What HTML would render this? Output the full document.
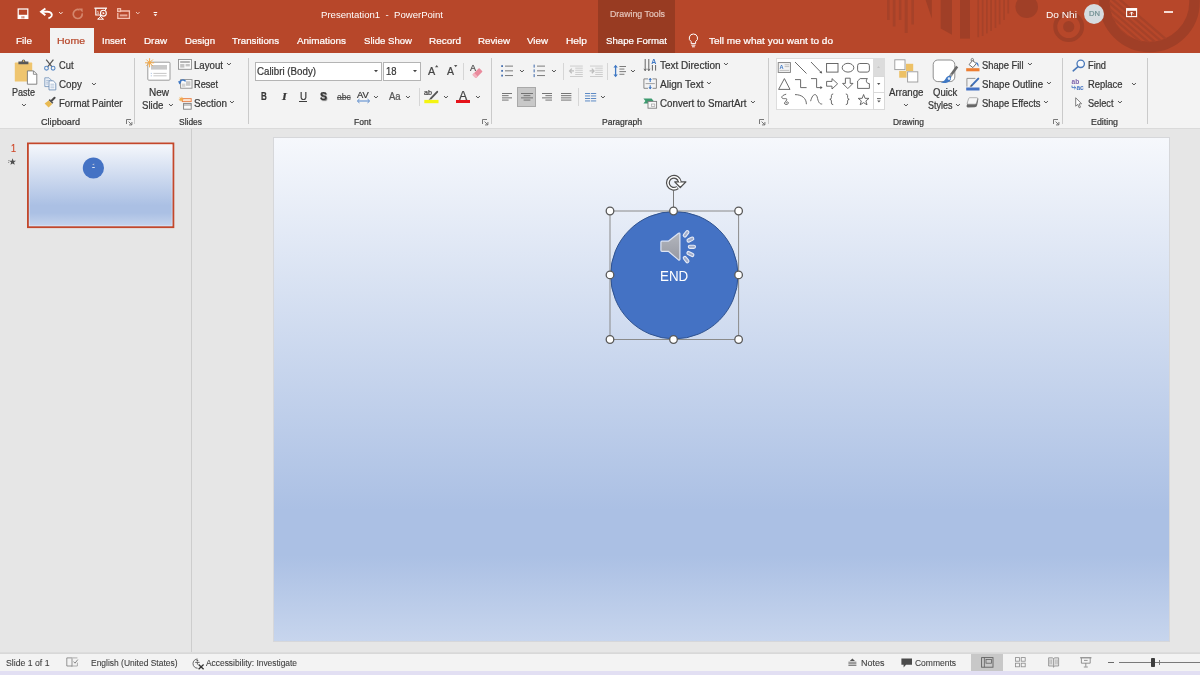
<!DOCTYPE html>
<html lang="en"><head><meta charset="utf-8"><title>Presentation1 - PowerPoint</title>
<style>
html,body{margin:0;padding:0}
body{width:1200px;height:675px;overflow:hidden;position:relative;background:#e6e6e6;font-family:"Liberation Sans", sans-serif;}
#app{position:absolute;left:0;top:0;width:1200px;height:675px;overflow:hidden;will-change:transform}
#app>div,#app>svg,#tx>span{position:absolute;display:block}
#tx{left:0;top:0;width:1200px;height:675px;will-change:transform}
#tx>span{white-space:pre;line-height:1;transform-origin:0 0;-webkit-text-stroke:0.22px currentColor;}
svg{overflow:visible}
</style></head><body><div id="app">
<div style="left:0px;top:0px;width:1200px;height:53px;background:#b7472a;"></div>
<svg style="left:0px;top:0px;overflow:hidden;" width="1200" height="53" viewBox="0 0 1200 53"><g><rect x="887" y="0" width="2.6" height="20" fill="#a64229"/><rect x="892.8" y="0" width="2.7" height="26.5" fill="#a64229"/><rect x="898.9" y="0" width="2.5" height="20" fill="#a64229"/><rect x="904.7" y="0" width="3" height="33" fill="#a64229"/><rect x="911.4" y="0" width="2.6" height="24.5" fill="#a64229"/><path d="M925.6 0 L931.8 0 L931.8 18.5 Z" fill="#a03f27"/><path d="M940.7 0 L952 0 L952 34.7 L940.7 28.5 Z" fill="#a03f27"/><rect x="960" y="0" width="10" height="38.6" fill="#a03f27"/><rect x="977.4" y="0" width="1.7" height="37.2" fill="#a64229"/><rect x="981.8" y="0" width="1.7" height="36" fill="#a64229"/><rect x="986" y="0" width="1.7" height="33.4" fill="#a64229"/><rect x="990.2" y="0" width="1.7" height="31" fill="#a64229"/><rect x="994.6" y="0" width="1.7" height="28" fill="#a64229"/><rect x="998.8" y="0" width="1.7" height="24.4" fill="#a64229"/><rect x="1003.2" y="0" width="1.7" height="20" fill="#a64229"/><rect x="1007.4" y="0" width="1.7" height="13.5" fill="#a64229"/><circle cx="1026.7" cy="6.7" r="11.3" fill="#a03f27"/><circle cx="1068.7" cy="26.7" r="5.6" fill="#a03f27"/><circle cx="1068.7" cy="26.7" r="13.4" fill="none" stroke="#a03f27" stroke-width="4"/><circle cx="1149.5" cy="2" r="45" fill="none" stroke="#a03f27" stroke-width="10.5"/><clipPath id="rc"><circle cx="1149.5" cy="2" r="40.5"/></clipPath><g clip-path="url(#rc)"><path d="M1097.5 -19.5 L1181.0 52.1" stroke="#a64229" stroke-width="2.3"/><path d="M1094.5 -16.0 L1178.0 55.6" stroke="#a64229" stroke-width="2.3"/><path d="M1091.5 -12.5 L1175.0 59.1" stroke="#a64229" stroke-width="2.3"/><path d="M1088.5 -9.1 L1172.0 62.6" stroke="#a64229" stroke-width="2.3"/><path d="M1085.6 -5.6 L1169.0 66.0" stroke="#a64229" stroke-width="2.3"/><path d="M1082.6 -2.1 L1166.0 69.5" stroke="#a64229" stroke-width="2.3"/><path d="M1079.6 1.4 L1163.1 73.0" stroke="#a64229" stroke-width="2.3"/></g></g></svg>
<div style="left:598px;top:0px;width:77px;height:53px;background:#983b22;"></div>
<div style="left:50px;top:28px;width:44px;height:26px;background:#f3f3f3;"></div>
<div style="left:0px;top:53px;width:1200px;height:75px;background:#f3f3f3;"></div>
<div style="left:0px;top:128px;width:1200px;height:1px;background:#dadada;"></div>
<div style="left:0px;top:129px;width:1200px;height:524px;background:#e6e6e6;"></div>
<div style="left:191px;top:129px;width:1px;height:523px;background:#cdcdcd;"></div>
<div style="left:0px;top:652px;width:1200px;height:2px;background:linear-gradient(180deg,#dedede,#d6d6d6);"></div>
<div style="left:0px;top:654px;width:1200px;height:17px;background:#f3f3f3;"></div>
<div style="left:0px;top:671px;width:1200px;height:4px;background:#e2dff3;"></div>
<svg style="left:1084px;top:4px;" width="20" height="20" viewBox="0 0 20 20"><circle cx="10" cy="10" r="10" fill="#d6dce0"/></svg>
<div style="left:134px;top:58px;width:1px;height:66px;background:#cacaca;"></div>
<div style="left:248px;top:58px;width:1px;height:66px;background:#cacaca;"></div>
<div style="left:490.5px;top:58px;width:1px;height:66px;background:#cacaca;"></div>
<div style="left:768px;top:58px;width:1px;height:66px;background:#cacaca;"></div>
<div style="left:1062px;top:58px;width:1px;height:66px;background:#cacaca;"></div>
<div style="left:1147px;top:58px;width:1px;height:66px;background:#cacaca;"></div>
<div style="left:254.5px;top:62px;width:127px;height:19px;background:#ffffff;box-sizing:border-box;border:1px solid #b4b4b4;"></div>
<div style="left:383px;top:62px;width:37.5px;height:19px;background:#ffffff;box-sizing:border-box;border:1px solid #b4b4b4;"></div>
<div style="left:971px;top:654px;width:32px;height:17px;background:#c8c8c8;"></div>
<svg style="left:26px;top:141px;" width="150" height="89" viewBox="0 0 150 89"><defs><linearGradient id="sg" x1="0" y1="0" x2="0" y2="1"><stop offset="0" stop-color="#f6f8fc"/><stop offset="0.74" stop-color="#abc0e4"/><stop offset="0.83" stop-color="#abc0e4"/><stop offset="1" stop-color="#c7d5ed"/></linearGradient></defs><rect x="1.9" y="2.4" width="145.5" height="83.8" fill="url(#sg)" stroke="#c4472a" stroke-width="1.8"/><rect x="3.3" y="3.8" width="142.7" height="81" fill="none" stroke="#f4f6fb" stroke-width="0.5" opacity="0.7"/></svg>
<svg style="left:82px;top:157px;" width="23" height="23" viewBox="0 0 23 23"><circle cx="11.4" cy="11" r="10.6" fill="#4472c4"/><rect x="10.2" y="10.1" width="2.6" height="0.9" fill="#e8eefa"/><path d="M10.6 7 L11.4 7 L12.2 6.2 L12.2 8.6 L11.4 7.9 L10.6 7.9 Z" fill="#aeb9d2"/></svg>
<svg style="left:8px;top:157.5px;" width="9" height="8" viewBox="0 0 9 8"><path d="M4.60 0.30 L5.48 2.69 L8.02 2.79 L6.03 4.36 L6.72 6.81 L4.60 5.40 L2.48 6.81 L3.17 4.36 L1.18 2.79 L3.72 2.69 Z" fill="#4f4f4f"/><path d="M0.2 2.6 L1.4 2.6 M0 4.4 L1.2 4.4" stroke="#6a6a6a" stroke-width="0.7"/></svg>
<div style="left:274px;top:138px;width:895px;height:503px;background:linear-gradient(180deg,#f6f8fc 0%,#abc0e4 74%,#abc0e4 83%,#c7d5ed 100%);box-shadow:0 0 0 1px #d6d7da;"></div>
<svg style="left:600px;top:165px;" width="150" height="185" viewBox="0 0 150 185"><defs><linearGradient id="spk" x1="0" y1="0" x2="0" y2="1"><stop offset="0" stop-color="#b3b6bd"/><stop offset="1" stop-color="#9699a3"/></linearGradient></defs><circle cx="74.3" cy="110.2" r="63.7" fill="#4472c4" stroke="#2f528f" stroke-width="1"/><rect x="10.0" y="46.0" width="128.6" height="128.5" fill="none" stroke="#8a8a8a" stroke-width="1"/><path d="M73.5 25.5 L73.5 42" stroke="#7a7a7a" stroke-width="1"/><circle cx="10.0" cy="46.0" r="3.8" fill="#ffffff" stroke="#595959" stroke-width="1.3"/><circle cx="10.0" cy="109.9" r="3.8" fill="#ffffff" stroke="#595959" stroke-width="1.3"/><circle cx="10.0" cy="174.5" r="3.8" fill="#ffffff" stroke="#595959" stroke-width="1.3"/><circle cx="73.5" cy="46.0" r="3.8" fill="#ffffff" stroke="#595959" stroke-width="1.3"/><circle cx="73.5" cy="174.5" r="3.8" fill="#ffffff" stroke="#595959" stroke-width="1.3"/><circle cx="138.6" cy="46.0" r="3.8" fill="#ffffff" stroke="#595959" stroke-width="1.3"/><circle cx="138.6" cy="109.9" r="3.8" fill="#ffffff" stroke="#595959" stroke-width="1.3"/><circle cx="138.6" cy="174.5" r="3.8" fill="#ffffff" stroke="#595959" stroke-width="1.3"/><path d="M77.59 22.53 A6.0 6.0 0 1 1 79.84 16.96" fill="none" stroke="#4f4f4f" stroke-width="4.0"/><path d="M77.34 22.71 A6.0 6.0 0 1 1 79.84 16.96" fill="none" stroke="#ffffff" stroke-width="1.5"/><path d="M74.7 16.9 L85.9 16.9 L80.3 22.5 Z" fill="#ffffff" stroke="#4f4f4f" stroke-width="1.25" stroke-linejoin="round"/><path d="M79.10 14.80 A6.0 6.0 0 0 1 79.89 17.38" fill="none" stroke="#ffffff" stroke-width="1.5"/><path d="M61.89999999999998 76.19999999999999 L68.29999999999998 76.19999999999999 L78.49999999999997 68.29999999999998 Q79.89999999999998 67.49999999999999 79.89999999999998 69.1 L79.89999999999998 94.1 Q79.89999999999998 95.69999999999999 78.49999999999997 94.89999999999999 L68.29999999999998 86.29999999999998 L61.89999999999998 86.29999999999998 Q60.89999999999998 86.29999999999998 60.89999999999998 85.29999999999998 L60.89999999999998 77.19999999999999 Q60.89999999999998 76.19999999999999 61.89999999999998 76.19999999999999 Z" fill="url(#spk)" stroke="#dde4f3" stroke-width="1.2" stroke-linejoin="round"/><rect x="82.5" y="67.2" width="7.2" height="3.2" rx="1.6" fill="#a3aecb" stroke="#e6ebf7" stroke-width="1.1" transform="rotate(-52 86.1 68.8)"/><rect x="86.8" y="73.0" width="7.2" height="3.2" rx="1.6" fill="#a3aecb" stroke="#e6ebf7" stroke-width="1.1" transform="rotate(-27 90.4 74.6)"/><rect x="88.3" y="80.2" width="7.2" height="3.2" rx="1.6" fill="#a3aecb" stroke="#e6ebf7" stroke-width="1.1" transform="rotate(0 91.9 81.8)"/><rect x="86.8" y="87.4" width="7.2" height="3.2" rx="1.6" fill="#a3aecb" stroke="#e6ebf7" stroke-width="1.1" transform="rotate(27 90.4 89.0)"/><rect x="82.5" y="93.0" width="7.2" height="3.2" rx="1.6" fill="#a3aecb" stroke="#e6ebf7" stroke-width="1.1" transform="rotate(52 86.1 94.6)"/></svg>
<svg style="left:17px;top:7.5px;" width="12" height="11" viewBox="0 0 12 11"><rect x="1.2" y="1" width="9.6" height="9.4" fill="none" stroke="#ffffff" stroke-width="1.25"/><rect x="1.2" y="6.8" width="9.6" height="3.6" fill="#ffffff"/><rect x="4.6" y="8.2" width="0.9" height="2.2" fill="#b7472a"/><rect x="6.4" y="8.2" width="0.9" height="2.2" fill="#b7472a"/></svg>
<svg style="left:39px;top:7px;" width="15" height="13" viewBox="0 0 15 13"><path d="M6.4 1.4 L2 4.8 L6.4 8.2" fill="none" stroke="#ffffff" stroke-width="1.9" stroke-linejoin="miter"/><path d="M2.6 4.8 L8.6 4.8 C12 4.8 13.4 7 12.6 9 C12 10.4 10.8 11 9.4 11.2" fill="none" stroke="#ffffff" stroke-width="1.9"/></svg>
<svg style="left:57.7px;top:10.85px;" width="5.6" height="3.9" viewBox="0 0 5.6 3.9"><path d="M1 1 L2.8 2.9 L4.6 1" fill="none" stroke="#f6e0d9" stroke-width="1.0"/></svg>
<svg style="left:72px;top:7.5px;" width="12" height="12" viewBox="0 0 12 12"><path d="M7.6 1.9 A4.5 4.5 0 1 0 10.2 5.4" fill="none" stroke="#d4866d" stroke-width="1.7"/><path d="M6.6 0.4 L10.6 0.4 L10.6 4.4 Z" fill="#d4866d"/></svg>
<svg style="left:94px;top:7px;" width="14" height="13" viewBox="0 0 14 13"><path d="M0.4 1.2 L13 1.2" stroke="#ffffff" stroke-width="1.3"/><path d="M1.8 1.6 L1.8 8 L6.2 8 M11.6 1.6 L11.6 3" fill="none" stroke="#ffffff" stroke-width="1.1"/><circle cx="9.4" cy="6.2" r="2.9" fill="none" stroke="#ffffff" stroke-width="1.1"/><path d="M8.6 4.8 L10.8 6.2 L8.6 7.6 Z" fill="#ffffff"/><text x="3" y="6.8" font-family="Liberation Sans, sans-serif" font-size="4" fill="#ffffff">5</text><path d="M6.6 8 L6.6 10 M4 12 L6.6 9.6 L9.2 12 M3.4 12.2 L9.8 12.2" fill="none" stroke="#ffffff" stroke-width="1"/></svg>
<svg style="left:117px;top:7.5px;" width="14" height="12" viewBox="0 0 14 12"><path d="M4 3 L12.4 3 L12.4 10.4 L0.8 10.4 L0.8 5" fill="none" stroke="#f5c0b0" stroke-width="1.3"/><rect x="0.6" y="0.6" width="3" height="3" fill="none" stroke="#f5c0b0" stroke-width="1.1"/><path d="M0.2 2.1 L4 2.1" stroke="#f5c0b0" stroke-width="0.8"/><rect x="2.8" y="6.4" width="7.6" height="2" fill="#f5c0b0" opacity="0.8"/></svg>
<svg style="left:135.2px;top:10.85px;" width="5.6" height="3.9" viewBox="0 0 5.6 3.9"><path d="M1 1 L2.8 2.9 L4.6 1" fill="none" stroke="#f1d5cc" stroke-width="0.9"/></svg>
<svg style="left:153.3px;top:10.6px;" width="5" height="6" viewBox="0 0 5 6"><rect x="0.6" y="1" width="3.6" height="1" fill="#ffffff"/><path d="M0.6 3.2 L4.2 3.2 L2.4 5.2 Z" fill="#ffffff"/></svg>
<svg style="left:1126px;top:8px;" width="12" height="10" viewBox="0 0 12 10"><rect x="0.6" y="0.6" width="10" height="8" fill="none" stroke="#ffffff" stroke-width="1.1"/><rect x="0.6" y="0.6" width="10" height="2.2" fill="#ffffff"/><path d="M5.6 7.6 L5.6 4.2 M4 5.6 L5.6 4 L7.2 5.6" fill="none" stroke="#ffffff" stroke-width="1"/></svg>
<div style="left:1163.5px;top:11.3px;width:9px;height:1.3px;background:#f6dcd4;"></div>
<svg style="left:688px;top:33px;" width="11" height="16" viewBox="0 0 11 16"><path d="M5.4 1 A4.1 4.1 0 0 1 7.6 8.6 L7.6 10.6 L3.2 10.6 L3.2 8.6 A4.1 4.1 0 0 1 5.4 1 Z" fill="none" stroke="#ffffff" stroke-width="1"/><path d="M3.4 12.2 L7.4 12.2 M4 13.8 L6.8 13.8" stroke="#ffffff" stroke-width="1"/></svg>
<svg style="left:14px;top:59px;" width="24" height="26" viewBox="0 0 24 26"><rect x="0.8" y="3.6" width="17.4" height="19" rx="0.6" fill="#efc56f"/><path d="M4.4 5.3 L4.4 2.6 L7.6 2.6 Q7.8 0.5 9.5 0.5 Q11.2 0.5 11.4 2.6 L14.4 2.6 L14.4 5.3 Z" fill="#585858"/><circle cx="9.5" cy="2.1" r="0.8" fill="#efc56f"/><path d="M13.4 11.9 L19.6 11.9 L22.8 15.1 L22.8 25.2 L13.4 25.2 Z" fill="#ffffff" stroke="#777" stroke-width="0.9"/><path d="M19.4 12 L19.4 15.3 L22.7 15.3" fill="none" stroke="#777" stroke-width="0.8"/></svg>
<svg style="left:20.65px;top:102.6px;" width="5.9" height="4.0" viewBox="0 0 5.9 4.0"><path d="M1 1 L2.95 3.0 L4.9 1" fill="none" stroke="#505050" stroke-width="1"/></svg>
<svg style="left:44px;top:59px;" width="12" height="12" viewBox="0 0 12 12"><path d="M2.2 0.6 L8.2 8.2 M9.4 0.6 L3.4 8.2" stroke="#555" stroke-width="1.2" fill="none"/><circle cx="2.5" cy="9.2" r="1.9" fill="none" stroke="#5a8ac6" stroke-width="1.1"/><circle cx="9.1" cy="9.2" r="1.9" fill="none" stroke="#5a8ac6" stroke-width="1.1"/></svg>
<svg style="left:43.5px;top:77px;" width="13" height="14" viewBox="0 0 13 14"><path d="M0.8 0.8 L5 0.8 L7.4 3.2 L7.4 9.6 L0.8 9.6 Z" fill="#eef2f8" stroke="#7f9cc0" stroke-width="0.9"/><path d="M2.2 3.4 L5.6 3.4 M2.2 5.2 L4 5.2 M2.2 7 L4 7" stroke="#8fa9c8" stroke-width="0.7"/><path d="M5 3.8 L9.2 3.8 L11.8 6.4 L11.8 12.9 L5 12.9 Z" fill="#ffffff" stroke="#6f8fb6" stroke-width="0.9"/><path d="M6.4 7.2 L10.4 7.2 M6.4 9 L10.4 9 M6.4 10.8 L10.4 10.8" stroke="#8fa9c8" stroke-width="0.7"/></svg>
<svg style="left:90.65px;top:81.8px;" width="5.9" height="4.0" viewBox="0 0 5.9 4.0"><path d="M1 1 L2.95 3.0 L4.9 1" fill="none" stroke="#505050" stroke-width="1"/></svg>
<svg style="left:44px;top:96.5px;" width="12" height="11" viewBox="0 0 12 11"><path d="M7.6 3.8 L10.6 0.8" stroke="#4a4a4a" stroke-width="2" stroke-linecap="round"/><path d="M5.2 2.6 L8.8 6.2" stroke="#555" stroke-width="1.6"/><path d="M4.6 3.4 L8.2 7 L4.6 10.4 L0.6 6.6 Z" fill="#e9ba52"/></svg>
<svg style="left:125.5px;top:118.5px;" width="7" height="7" viewBox="0 0 7 7"><path d="M0.5 5 L0.5 0.5 L5 0.5" fill="none" stroke="#6a6a6a" stroke-width="0.9"/><path d="M2.6 2.6 L5.8 5.8 M5.9 3 L5.9 5.9 L3 5.9" fill="none" stroke="#6a6a6a" stroke-width="0.9"/></svg>
<svg style="left:481.5px;top:118.5px;" width="7" height="7" viewBox="0 0 7 7"><path d="M0.5 5 L0.5 0.5 L5 0.5" fill="none" stroke="#6a6a6a" stroke-width="0.9"/><path d="M2.6 2.6 L5.8 5.8 M5.9 3 L5.9 5.9 L3 5.9" fill="none" stroke="#6a6a6a" stroke-width="0.9"/></svg>
<svg style="left:758.5px;top:118.5px;" width="7" height="7" viewBox="0 0 7 7"><path d="M0.5 5 L0.5 0.5 L5 0.5" fill="none" stroke="#6a6a6a" stroke-width="0.9"/><path d="M2.6 2.6 L5.8 5.8 M5.9 3 L5.9 5.9 L3 5.9" fill="none" stroke="#6a6a6a" stroke-width="0.9"/></svg>
<svg style="left:1052.5px;top:118.5px;" width="7" height="7" viewBox="0 0 7 7"><path d="M0.5 5 L0.5 0.5 L5 0.5" fill="none" stroke="#6a6a6a" stroke-width="0.9"/><path d="M2.6 2.6 L5.8 5.8 M5.9 3 L5.9 5.9 L3 5.9" fill="none" stroke="#6a6a6a" stroke-width="0.9"/></svg>
<svg style="left:144px;top:57px;" width="28" height="25" viewBox="0 0 28 25"><rect x="3.8" y="5.2" width="22.2" height="18" rx="1" fill="#ffffff" stroke="#9c9c9c" stroke-width="1"/><rect x="7" y="8" width="16" height="4.6" fill="#c9c9c9"/><path d="M9.4 16.4 L22.6 16.4 M9.4 18.8 L22.6 18.8" stroke="#b9b9b9" stroke-width="0.8"/><path d="M6.8 16.4 L7.8 16.4 M6.8 18.8 L7.8 18.8" stroke="#9bb7dd" stroke-width="0.9"/><path d="M6.50 5.80 L10.20 5.80 M6.24 6.44 L8.85 9.05 M5.60 6.70 L5.60 10.40 M4.96 6.44 L2.35 9.05 M4.70 5.80 L1.00 5.80 M4.96 5.16 L2.35 2.55 M5.60 4.90 L5.60 1.20 M6.24 5.16 L8.85 2.55 " stroke="#f2ab4d" stroke-width="1.0" fill="none"/><circle cx="5.6" cy="5.8" r="1.5" fill="#f2ab4d"/></svg>
<svg style="left:167.75px;top:102.6px;" width="5.9" height="4.0" viewBox="0 0 5.9 4.0"><path d="M1 1 L2.95 3.0 L4.9 1" fill="none" stroke="#505050" stroke-width="1"/></svg>
<svg style="left:178px;top:59px;" width="14" height="11" viewBox="0 0 14 11"><rect x="0.5" y="0.5" width="13" height="9.8" fill="#fafafa" stroke="#8e8e8e" stroke-width="0.9"/><rect x="2.2" y="2" width="9.6" height="2" fill="#b5b5b5"/><rect x="2.2" y="5" width="4.2" height="3.6" fill="#c4c4c4"/><rect x="7.6" y="5" width="4.2" height="2.4" fill="#c4c4c4"/></svg>
<svg style="left:226.05px;top:62.0px;" width="5.9" height="4.0" viewBox="0 0 5.9 4.0"><path d="M1 1 L2.95 3.0 L4.9 1" fill="none" stroke="#505050" stroke-width="1"/></svg>
<svg style="left:177.5px;top:78px;" width="15" height="11" viewBox="0 0 15 11"><rect x="2.6" y="1.6" width="11.4" height="8.6" fill="#fafafa" stroke="#8e8e8e" stroke-width="0.9"/><rect x="8" y="3.2" width="4.4" height="4.6" fill="#c9c9c9"/><rect x="3.8" y="5.6" width="3.6" height="3.2" fill="#d3d3d3"/><path d="M1.6 5.2 A3.3 3.3 0 0 1 7.6 3.4" fill="none" stroke="#3f78c4" stroke-width="1.5"/><path d="M0 3.2 L3.6 3.4 L1.6 6.6 Z" fill="#3f78c4"/></svg>
<svg style="left:179px;top:96.5px;" width="13" height="13" viewBox="0 0 13 13"><rect x="3.4" y="1.6" width="8.8" height="3" fill="#fbe3cf" stroke="#e9824a" stroke-width="0.9"/><rect x="4.6" y="6.4" width="7.6" height="5.8" fill="#fafafa" stroke="#7e7e7e" stroke-width="0.9"/><path d="M4.6 8 L12.2 8" stroke="#7e7e7e" stroke-width="0.8"/><path d="M3.10 2.20 L4.60 2.20 M2.84 2.84 L3.90 3.90 M2.20 3.10 L2.20 4.60 M1.56 2.84 L0.50 3.90 M1.30 2.20 L-0.20 2.20 M1.56 1.56 L0.50 0.50 M2.20 1.30 L2.20 -0.20 M2.84 1.56 L3.90 0.50 " stroke="#f2ab4d" stroke-width="0.7" fill="none"/><circle cx="2.2" cy="2.2" r="1.5" fill="#f2ab4d"/></svg>
<svg style="left:229.35px;top:100.0px;" width="5.9" height="4.0" viewBox="0 0 5.9 4.0"><path d="M1 1 L2.95 3.0 L4.9 1" fill="none" stroke="#505050" stroke-width="1"/></svg>
<svg style="left:374.0px;top:70.3px;" width="4" height="2.2" viewBox="0 0 4 2.2"><path d="M0 0 L4 0 L2.0 2.2 Z" fill="#444"/></svg>
<svg style="left:412.6px;top:70.3px;" width="4" height="2.2" viewBox="0 0 4 2.2"><path d="M0 0 L4 0 L2.0 2.2 Z" fill="#444"/></svg>
<div style="left:299px;top:101.2px;width:8px;height:0.9px;background:#3c3c3c;"></div>
<svg style="left:356.5px;top:99px;" width="13" height="4" viewBox="0 0 13 4"><path d="M1.6 2 L11.4 2" stroke="#5d8fd0" stroke-width="1.1"/><path d="M2.4 0.2 L0.4 2 L2.4 3.8 M10.6 0.2 L12.6 2 L10.6 3.8" fill="none" stroke="#3f78c4" stroke-width="1"/></svg>
<svg style="left:372.85px;top:94.8px;" width="5.9" height="4.0" viewBox="0 0 5.9 4.0"><path d="M1 1 L2.95 3.0 L4.9 1" fill="none" stroke="#505050" stroke-width="1"/></svg>
<svg style="left:404.75px;top:94.8px;" width="5.9" height="4.0" viewBox="0 0 5.9 4.0"><path d="M1 1 L2.95 3.0 L4.9 1" fill="none" stroke="#505050" stroke-width="1"/></svg>
<svg style="left:442.55px;top:94.8px;" width="5.9" height="4.0" viewBox="0 0 5.9 4.0"><path d="M1 1 L2.95 3.0 L4.9 1" fill="none" stroke="#505050" stroke-width="1"/></svg>
<svg style="left:474.85px;top:94.8px;" width="5.9" height="4.0" viewBox="0 0 5.9 4.0"><path d="M1 1 L2.95 3.0 L4.9 1" fill="none" stroke="#505050" stroke-width="1"/></svg>
<svg style="left:435px;top:65px;" width="3.4" height="2.2" viewBox="0 0 3.4 2.2"><path d="M0 2.2 L3.4 2.2 L1.7 0 Z" fill="#555"/></svg>
<svg style="left:453.6px;top:65.2px;" width="3.4" height="2.2" viewBox="0 0 3.4 2.2"><path d="M0 0 L3.4 0 L1.7 2.2 Z" fill="#555"/></svg>
<div style="left:463px;top:63px;width:1px;height:17px;background:#d6d6d6;"></div>
<div style="left:418.5px;top:88px;width:1px;height:18px;background:#d6d6d6;"></div>
<svg style="left:471px;top:66px;" width="13" height="13" viewBox="0 0 13 13"><g transform="rotate(-45 6.5 7)"><rect x="1.6" y="4.6" width="9.6" height="5" rx="0.8" fill="#e98a9c"/><rect x="1.6" y="4.6" width="2.6" height="5" rx="0.6" fill="#f3b4c0"/></g></svg>
<svg style="left:423.5px;top:90px;" width="15" height="14" viewBox="0 0 15 14"><path d="M13.2 1.8 L7 8.4" stroke="#555" stroke-width="1.9" stroke-linecap="round"/><path d="M6.4 7.8 L4.6 10 L7.4 9 Z" fill="#555"/><rect x="0.3" y="9.9" width="14.2" height="3.3" fill="#f4f411"/></svg>
<div style="left:456.2px;top:100.2px;width:13.4px;height:3px;background:#e5131a;"></div>
<svg style="left:500px;top:64px;" width="14" height="13" viewBox="0 0 14 13"><rect x="1.2" y="1.20" width="1.8" height="1.8" fill="#4a72b0"/><rect x="5" y="1.65" width="8" height="0.9" fill="#6e6e6e"/><rect x="1.2" y="5.95" width="1.8" height="1.8" fill="#4a72b0"/><rect x="5" y="6.40" width="8" height="0.9" fill="#6e6e6e"/><rect x="1.2" y="10.70" width="1.8" height="1.8" fill="#4a72b0"/><rect x="5" y="11.15" width="8" height="0.9" fill="#6e6e6e"/></svg>
<svg style="left:519.05px;top:69.3px;" width="5.9" height="4.0" viewBox="0 0 5.9 4.0"><path d="M1 1 L2.95 3.0 L4.9 1" fill="none" stroke="#505050" stroke-width="1"/></svg>
<svg style="left:532px;top:64px;" width="14" height="13" viewBox="0 0 14 13"><rect x="1.6" y="0.60" width="1.1" height="3" fill="#4a72b0"/><rect x="5" y="1.65" width="8" height="0.9" fill="#6e6e6e"/><rect x="1.6" y="5.35" width="1.1" height="3" fill="#4a72b0"/><rect x="5" y="6.40" width="8" height="0.9" fill="#6e6e6e"/><rect x="1.6" y="10.10" width="1.1" height="3" fill="#4a72b0"/><rect x="5" y="11.15" width="8" height="0.9" fill="#6e6e6e"/></svg>
<svg style="left:551.35px;top:69.3px;" width="5.9" height="4.0" viewBox="0 0 5.9 4.0"><path d="M1 1 L2.95 3.0 L4.9 1" fill="none" stroke="#505050" stroke-width="1"/></svg>
<div style="left:563.2px;top:63px;width:1px;height:17px;background:#d6d6d6;"></div>
<svg style="left:568.5px;top:65px;" width="14" height="12" viewBox="0 0 14 12"><rect x="1" y="0.60" width="12.8" height="0.9" fill="#c9c9c9"/><rect x="6.2" y="2.70" width="7.6" height="0.9" fill="#c9c9c9"/><rect x="6.2" y="4.80" width="7.6" height="0.9" fill="#c9c9c9"/><rect x="6.2" y="6.90" width="7.6" height="0.9" fill="#c9c9c9"/><rect x="6.2" y="9.00" width="7.6" height="0.9" fill="#c9c9c9"/><rect x="1" y="11.10" width="12.8" height="0.9" fill="#c9c9c9"/><path d="M5 5.9 L0.8 5.9 M2.8 3.6 L0.6 5.9 L2.8 8.2" fill="none" stroke="#bdbdbd" stroke-width="1.3"/></svg>
<svg style="left:589px;top:65px;" width="14" height="12" viewBox="0 0 14 12"><rect x="1" y="0.60" width="12.8" height="0.9" fill="#c9c9c9"/><rect x="6.2" y="2.70" width="7.6" height="0.9" fill="#c9c9c9"/><rect x="6.2" y="4.80" width="7.6" height="0.9" fill="#c9c9c9"/><rect x="6.2" y="6.90" width="7.6" height="0.9" fill="#c9c9c9"/><rect x="6.2" y="9.00" width="7.6" height="0.9" fill="#c9c9c9"/><rect x="1" y="11.10" width="12.8" height="0.9" fill="#c9c9c9"/><path d="M0.6 5.9 L4.8 5.9 M2.8 3.6 L5 5.9 L2.8 8.2" fill="none" stroke="#bdbdbd" stroke-width="1.3"/></svg>
<div style="left:607.3px;top:63px;width:1px;height:17px;background:#d6d6d6;"></div>
<svg style="left:613px;top:64px;" width="14" height="14" viewBox="0 0 14 14"><path d="M2.6 2 L2.6 12 " stroke="#3f78c4" stroke-width="1.3"/><path d="M0.4 3.6 L2.6 0.8 L4.8 3.6 Z M0.4 10.4 L2.6 13.2 L4.8 10.4 Z" fill="#3f78c4"/><rect x="6.4" y="2.00" width="6.6" height="0.9" fill="#6e6e6e"/><rect x="6.4" y="4.60" width="5" height="0.9" fill="#6e6e6e"/><rect x="6.4" y="7.20" width="6.6" height="0.9" fill="#6e6e6e"/><rect x="6.4" y="9.80" width="5" height="0.9" fill="#6e6e6e"/></svg>
<svg style="left:630.05px;top:69.3px;" width="5.9" height="4.0" viewBox="0 0 5.9 4.0"><path d="M1 1 L2.95 3.0 L4.9 1" fill="none" stroke="#505050" stroke-width="1"/></svg>
<svg style="left:502px;top:92.7px;" width="14" height="10" viewBox="0 0 14 10"><rect x="0" y="0.00" width="10" height="0.95" fill="#6e6e6e"/><rect x="0" y="2.20" width="6.6" height="0.95" fill="#6e6e6e"/><rect x="0" y="4.40" width="10" height="0.95" fill="#6e6e6e"/><rect x="0" y="6.60" width="6.6" height="0.95" fill="#6e6e6e"/></svg>
<div style="left:517.3px;top:87.3px;width:18.6px;height:19.3px;background:#c8c8c8;box-sizing:border-box;border:1px solid #a9a9a9;"></div>
<svg style="left:521px;top:92.7px;" width="14" height="10" viewBox="0 0 14 10"><rect x="0" y="0.00" width="12" height="0.95" fill="#6e6e6e"/><rect x="2.6" y="2.20" width="6.8" height="0.95" fill="#6e6e6e"/><rect x="0" y="4.40" width="12" height="0.95" fill="#6e6e6e"/><rect x="2.6" y="6.60" width="6.8" height="0.95" fill="#6e6e6e"/></svg>
<svg style="left:541.5px;top:92.7px;" width="14" height="10" viewBox="0 0 14 10"><rect x="0" y="0.00" width="10" height="0.95" fill="#6e6e6e"/><rect x="3.4" y="2.20" width="6.6" height="0.95" fill="#6e6e6e"/><rect x="0" y="4.40" width="10" height="0.95" fill="#6e6e6e"/><rect x="3.4" y="6.60" width="6.6" height="0.95" fill="#6e6e6e"/></svg>
<svg style="left:561px;top:92.7px;" width="14" height="10" viewBox="0 0 14 10"><rect x="0" y="0.00" width="10.4" height="0.95" fill="#6e6e6e"/><rect x="0" y="2.20" width="10.4" height="0.95" fill="#6e6e6e"/><rect x="0" y="4.40" width="10.4" height="0.95" fill="#6e6e6e"/><rect x="0" y="6.60" width="10.4" height="0.95" fill="#6e6e6e"/></svg>
<div style="left:578px;top:88px;width:1px;height:18px;background:#d6d6d6;"></div>
<svg style="left:584.5px;top:92.6px;" width="14" height="10" viewBox="0 0 14 10"><rect x="0" y="0.00" width="5.2" height="0.9" fill="#4d7fc0"/><rect x="0" y="2.50" width="5.2" height="0.9" fill="#4d7fc0"/><rect x="0" y="5.00" width="5.2" height="0.9" fill="#4d7fc0"/><rect x="0" y="7.50" width="5.2" height="0.9" fill="#4d7fc0"/></svg>
<svg style="left:590.9px;top:92.6px;" width="14" height="10" viewBox="0 0 14 10"><rect x="0" y="0.00" width="5.2" height="0.9" fill="#4d7fc0"/><rect x="0" y="2.50" width="5.2" height="0.9" fill="#4d7fc0"/><rect x="0" y="5.00" width="5.2" height="0.9" fill="#4d7fc0"/><rect x="0" y="7.50" width="5.2" height="0.9" fill="#4d7fc0"/></svg>
<svg style="left:600.35px;top:94.9px;" width="5.9" height="4.0" viewBox="0 0 5.9 4.0"><path d="M1 1 L2.95 3.0 L4.9 1" fill="none" stroke="#505050" stroke-width="1"/></svg>
<svg style="left:643px;top:58px;" width="15" height="14" viewBox="0 0 15 14"><path d="M2.2 1 L2.2 12.4 M5.8 1 L5.8 12.4" stroke="#555" stroke-width="0.9"/><path d="M1 10.8 L2.2 12.8 L3.4 10.8 M4.6 10.8 L5.8 12.8 L7 10.8" fill="none" stroke="#555" stroke-width="0.8"/><path d="M9.4 7 L9.4 12.6 M12.6 7 L12.6 12.6" stroke="#555" stroke-width="0.9"/><text x="8.2" y="5.8" font-family="Liberation Sans, sans-serif" font-size="7" font-weight="700" fill="#3f78c4">A</text></svg>
<svg style="left:722.95px;top:62.2px;" width="5.9" height="4.0" viewBox="0 0 5.9 4.0"><path d="M1 1 L2.95 3.0 L4.9 1" fill="none" stroke="#505050" stroke-width="1"/></svg>
<svg style="left:643px;top:78px;" width="15" height="12" viewBox="0 0 15 12"><path d="M5 0.9 L0.9 0.9 L0.9 10.3 L5 10.3 M9.6 0.9 L13.4 0.9 L13.4 10.3 L9.6 10.3" fill="none" stroke="#7d7d7d" stroke-width="0.9"/><path d="M2.6 5.6 L11.8 5.6" stroke="#8a8a8a" stroke-width="0.8"/><path d="M7.2 0.2 L7.2 4 M7.2 7.2 L7.2 11" stroke="#3f78c4" stroke-width="1.1"/><path d="M5.4 2 L7.2 0 L9 2 Z M5.4 9.2 L7.2 11.2 L9 9.2 Z" fill="#3f78c4"/></svg>
<svg style="left:706.15px;top:81.3px;" width="5.9" height="4.0" viewBox="0 0 5.9 4.0"><path d="M1 1 L2.95 3.0 L4.9 1" fill="none" stroke="#505050" stroke-width="1"/></svg>
<svg style="left:643px;top:97.5px;" width="15" height="11" viewBox="0 0 15 11"><path d="M0.4 0.6 L8.6 0.6 L10.6 3 L8.6 5.4 L0.4 5.4 L2.4 3 Z" fill="#3c9a6e"/><rect x="5" y="3.4" width="8.6" height="6.8" fill="#f7f7f7" stroke="#7d7d7d" stroke-width="0.9"/><rect x="8.4" y="6" width="3.4" height="2.4" fill="none" stroke="#9a9a9a" stroke-width="0.6"/></svg>
<svg style="left:749.55px;top:100.2px;" width="5.9" height="4.0" viewBox="0 0 5.9 4.0"><path d="M1 1 L2.95 3.0 L4.9 1" fill="none" stroke="#505050" stroke-width="1"/></svg>
<div style="left:775.5px;top:58px;width:109px;height:51.5px;background:#ffffff;box-sizing:border-box;border:1px solid #dddddd;"></div>
<div style="left:872.5px;top:58px;width:12px;height:17.5px;background:#dcdcdc;"></div>
<div style="left:872.5px;top:75.5px;width:12px;height:17px;background:#ffffff;box-sizing:border-box;border:1px solid #d9d9d9;"></div>
<div style="left:872.5px;top:92px;width:12px;height:17.5px;background:#ffffff;box-sizing:border-box;border:1px solid #d9d9d9;"></div>
<svg style="left:877.4px;top:65.6px;" width="3" height="2" viewBox="0 0 3 2"><path d="M0 2 L3 2 L1.5 0 Z" fill="#c4c4c4"/></svg>
<svg style="left:877.1px;top:83.0px;" width="3.4" height="2" viewBox="0 0 3.4 2"><path d="M0 0 L3.4 0 L1.7 2 Z" fill="#555"/></svg>
<svg style="left:877px;top:97.8px;" width="4" height="5.4" viewBox="0 0 4 5.4"><rect x="0" y="0.2" width="3.8" height="0.9" fill="#555"/><path d="M0.2 2.4 L3.6 2.4 L1.9 4.4 Z" fill="#555"/></svg>
<svg style="left:775px;top:58px;" width="98" height="52" viewBox="0 0 98 52"><rect x="3.2000000000000455" y="4.600000000000001" width="12.2" height="9.8" fill="#f4f4f4" stroke="#7b7b7b" stroke-width="0.9"/><text x="4.600000000000023" y="10.599999999999994" font-family="Liberation Sans, sans-serif" font-size="5.6" font-weight="700" fill="#3f78c4">A</text><path d="M9.6 6.8 L14.2 6.8 M9.6 8.6 L14.2 8.6 M4.6 12.4 L14.2 12.4" stroke="#9a9a9a" stroke-width="0.6"/><path d="M20.0 4.0 L31.5 15.5" fill="none" stroke="#5a5a5a" stroke-width="0.9" stroke-linejoin="round" /><path d="M36.0 4.0 L46.6 15.0" fill="none" stroke="#5a5a5a" stroke-width="0.9" stroke-linejoin="round" /><path d="M47.2 15.6 L44.4 14.8 L46.4 12.8 Z" fill="#5a5a5a"/><rect x="51.6" y="5.5" width="11.4" height="8.6" fill="none" stroke="#5a5a5a" stroke-width="0.9"/><ellipse cx="73.0" cy="9.7" rx="5.8" ry="4.4" fill="none" stroke="#5a5a5a" stroke-width="0.9"/><rect x="82.6" y="5.5" width="11.8" height="8.6" rx="2.2" fill="none" stroke="#5a5a5a" stroke-width="0.9"/><path d="M9.4 20.6 L15.0 31.4 L3.6 31.4 Z" fill="none" stroke="#5a5a5a" stroke-width="0.9" stroke-linejoin="round" /><path d="M20.0 21.6 L25.6 21.6 L25.6 29.6 L31.6 29.6" fill="none" stroke="#5a5a5a" stroke-width="0.9" stroke-linejoin="round" /><path d="M36.0 20.6 L41.6 20.6 L41.6 29.6 L46.6 29.6" fill="none" stroke="#5a5a5a" stroke-width="0.9" stroke-linejoin="round" /><path d="M47.6 29.6 L45.4 28.0 L45.4 31.2 Z" fill="#5a5a5a"/><path d="M51.6 23.4 L57.0 23.4 L57.0 20.6 L62.6 25.8 L57.0 31.0 L57.0 28.2 L51.6 28.2 Z" fill="none" stroke="#5a5a5a" stroke-width="0.9" stroke-linejoin="round" /><path d="M70.4 20.2 L75.2 20.2 L75.2 25.4 L78.0 25.4 L72.8 30.6 L67.6 25.4 L70.4 25.4 Z" fill="none" stroke="#5a5a5a" stroke-width="0.9" stroke-linejoin="round" /><path d="M82.6 30.4 L82.6 23.0 L85.2 20.6 L92.4 20.6 A2.8 2.8 0 0 0 94.4 25.6 L94.4 30.4 Z" fill="none" stroke="#5a5a5a" stroke-width="0.9" stroke-linejoin="round" /><path d="M11.2 36.2 C7.4 37.0 5.6 39.4 7.6 40.4 C9.6 41.2 12.4 39.6 11.6 42.0 C11.0 43.8 8.6 44.6 9.8 46.0 C11.0 47.2 13.8 46.0 13.4 44.6 C13.0 43.4 10.8 43.8 11.4 45.2" fill="none" stroke="#5a5a5a" stroke-width="0.9" stroke-linejoin="round" /><path d="M20.0 36.6 C27.0 36.6 31.4 40.4 31.4 46.2" fill="none" stroke="#5a5a5a" stroke-width="0.9" stroke-linejoin="round" /><path d="M35.6 43.2 C37.6 35.2 41.6 34.6 42.6 40.6 C43.6 45.4 45.6 46.2 47.2 46.0" fill="none" stroke="#5a5a5a" stroke-width="0.9" stroke-linejoin="round" /><path d="M58.2 36.0 Q56.4 36.0 56.4 37.6 L56.4 39.6 Q56.4 41.2 54.8 41.3 Q56.4 41.4 56.4 43.0 L56.4 45.0 Q56.4 46.6 58.2 46.6" fill="none" stroke="#5a5a5a" stroke-width="0.9" stroke-linejoin="round" /><path d="M70.8 36.0 Q72.6 36.0 72.6 37.6 L72.6 39.6 Q72.6 41.2 74.2 41.3 Q72.6 41.4 72.6 43.0 L72.6 45.0 Q72.6 46.6 70.8 46.6" fill="none" stroke="#5a5a5a" stroke-width="0.9" stroke-linejoin="round" /><path d="M88.6 36.5 L90.0 40.3 L94.0 40.4 L90.9 42.9 L92.0 46.8 L88.6 44.6 L85.2 46.8 L86.3 42.9 L83.2 40.4 L87.2 40.3 Z" fill="none" stroke="#5a5a5a" stroke-width="0.9" stroke-linejoin="round" /></svg>
<svg style="left:893px;top:58px;" width="27" height="26" viewBox="0 0 27 26"><rect x="13" y="5.8" width="7.2" height="7.2" fill="#edc166"/><rect x="6.2" y="12.9" width="7.4" height="6.8" fill="#edc166"/><rect x="1.8" y="1.8" width="10.2" height="9.8" fill="#ffffff" stroke="#9a9a9a" stroke-width="0.9"/><rect x="14.6" y="13.8" width="10.2" height="10.2" fill="#ffffff" stroke="#9a9a9a" stroke-width="0.9"/></svg>
<svg style="left:903.35px;top:102.8px;" width="5.9" height="4.0" viewBox="0 0 5.9 4.0"><path d="M1 1 L2.95 3.0 L4.9 1" fill="none" stroke="#505050" stroke-width="1"/></svg>
<svg style="left:931px;top:58px;" width="30" height="28" viewBox="0 0 30 28"><rect x="2.2" y="2" width="21.6" height="21.6" rx="4.6" fill="#ffffff" stroke="#8e8e8e" stroke-width="1"/><path d="M26.2 8.4 L20.4 16.6" stroke="#6a6a6a" stroke-width="2.6" stroke-linecap="butt"/><path d="M20.8 16 L19 18.6" stroke="#9a9a9a" stroke-width="2.8"/><path d="M19.6 18 C17 17.4 15.6 19 14.6 20.8 C13.4 22.8 11.4 24.2 9.6 24.6 C13 25.6 18.4 25 19.8 21.4 C20.2 20.2 20.2 19 19.6 18 Z" fill="#3f78c4"/><circle cx="18" cy="20.6" r="1.3" fill="#dfe9f6"/></svg>
<svg style="left:955.05px;top:102.8px;" width="5.9" height="4.0" viewBox="0 0 5.9 4.0"><path d="M1 1 L2.95 3.0 L4.9 1" fill="none" stroke="#505050" stroke-width="1"/></svg>
<svg style="left:965.5px;top:57.5px;" width="14" height="14" viewBox="0 0 14 14"><ellipse cx="6.3" cy="1.9" rx="1.2" ry="1.5" fill="none" stroke="#6a6a6a" stroke-width="0.8"/><path d="M6.5 2.6 L10.3 5.5 L6.9 9.6 L3.1 6.6 Z" fill="#ffffff" stroke="#5f5f5f" stroke-width="0.9" stroke-linejoin="round"/><path d="M10.4 4 C12.6 5.2 13 7.4 12.3 9 C11.6 8 11.4 6.6 10.2 5.6 Z" fill="#3f78c4"/><rect x="0.2" y="10.2" width="13.3" height="3.1" fill="#ed7d31"/></svg>
<svg style="left:1026.55px;top:62.0px;" width="5.9" height="4.0" viewBox="0 0 5.9 4.0"><path d="M1 1 L2.95 3.0 L4.9 1" fill="none" stroke="#505050" stroke-width="1"/></svg>
<svg style="left:965.5px;top:76.5px;" width="14" height="14" viewBox="0 0 14 14"><path d="M9.4 1.4 L0.9 1.4 L0.9 9.6" fill="none" stroke="#8a8a8a" stroke-width="0.9"/><path d="M12.3 1.6 L5.6 8.6" stroke="#3f6fb8" stroke-width="2" stroke-linecap="round"/><path d="M5.4 7.4 L3.6 10 L6.4 9 Z" fill="#5a5a5a"/><rect x="0.2" y="10.5" width="13.3" height="3" fill="#4472c4"/></svg>
<svg style="left:1045.75px;top:81.0px;" width="5.9" height="4.0" viewBox="0 0 5.9 4.0"><path d="M1 1 L2.95 3.0 L4.9 1" fill="none" stroke="#505050" stroke-width="1"/></svg>
<svg style="left:966px;top:97px;" width="13" height="11" viewBox="0 0 13 11"><path d="M3.4 1.2 L11.4 1.2 Q12.6 1.2 12.3 2.4 L11.2 8 Q10.8 10.2 8.6 10.3 L1.6 10.4 Q0.2 10.2 0.6 8.8 L1.2 7 Z" fill="#666666"/><path d="M3.8 0.7 L10.8 0.7 Q12 0.7 11.7 1.8 L10.4 6.2 Q10.1 7.2 9 7.2 L2 7.2 Q0.8 7.2 1.2 6.2 L2.6 1.6 Q2.9 0.7 3.8 0.7 Z" fill="#f6f6f6" stroke="#8a8a8a" stroke-width="0.6"/></svg>
<svg style="left:1043.05px;top:100.0px;" width="5.9" height="4.0" viewBox="0 0 5.9 4.0"><path d="M1 1 L2.95 3.0 L4.9 1" fill="none" stroke="#505050" stroke-width="1"/></svg>
<svg style="left:1071.5px;top:58.5px;" width="14" height="13" viewBox="0 0 14 13"><circle cx="8.7" cy="4.8" r="3.7" fill="#f8fafd" stroke="#4a78b8" stroke-width="1.3"/><path d="M6 7.6 L1.2 11.8" stroke="#4a78b8" stroke-width="1.6" stroke-linecap="round"/></svg>
<svg style="left:1071px;top:78px;" width="15" height="13" viewBox="0 0 15 13"><text x="0.6" y="5.6" font-family="Liberation Sans, sans-serif" font-size="6.6" font-weight="700" fill="#7d64ad">ab</text><text x="5.4" y="12" font-family="Liberation Sans, sans-serif" font-size="6.6" font-weight="700" fill="#4a78c4">ac</text><path d="M1 7.6 L1 9.6 L4.6 9.6 M3.2 8 L4.8 9.6 L3.2 11.2" fill="none" stroke="#4a78c4" stroke-width="0.9"/></svg>
<svg style="left:1131.05px;top:81.8px;" width="5.9" height="4.0" viewBox="0 0 5.9 4.0"><path d="M1 1 L2.95 3.0 L4.9 1" fill="none" stroke="#505050" stroke-width="1"/></svg>
<svg style="left:1075px;top:97.4px;" width="8" height="12" viewBox="0 0 8 12"><path d="M0.7 0.8 L0.7 9.2 L2.7 7.4 L4.2 10.8 L5.5 10.2 L4 6.9 L6.6 6.7 Z" fill="#ffffff" stroke="#5f5f5f" stroke-width="0.8" stroke-linejoin="round"/></svg>
<svg style="left:1116.85px;top:100.0px;" width="5.9" height="4.0" viewBox="0 0 5.9 4.0"><path d="M1 1 L2.95 3.0 L4.9 1" fill="none" stroke="#505050" stroke-width="1"/></svg>
<svg style="left:66px;top:657px;" width="13" height="11" viewBox="0 0 13 11"><path d="M6 1.4 L6 9.6 M0.8 0.9 L0.8 9 L6 9 M6 0.9 L0.8 0.9" fill="none" stroke="#7a7a7a" stroke-width="0.8"/><path d="M6 0.9 L11.4 0.9 M11.4 5.6 L11.4 9 L6 9" fill="none" stroke="#9a9a9a" stroke-width="0.8"/><path d="M7.6 4.6 L9 6.2 L11.8 2.6" fill="none" stroke="#7a7a7a" stroke-width="0.9"/></svg>
<svg style="left:190.5px;top:657.5px;" width="14" height="12" viewBox="0 0 14 12"><path d="M6.6 1 A4.6 4.6 0 1 0 6.6 10.2" fill="none" stroke="#555" stroke-width="0.9"/><circle cx="6.4" cy="2.6" r="0.9" fill="#555"/><path d="M4.2 4.4 L8.6 4.4 M6.4 4.4 L6.4 6.6" stroke="#555" stroke-width="0.9"/><path d="M7.6 6.6 L12.6 11.2 M12.6 6.6 L7.6 11.2" stroke="#333" stroke-width="1.3"/></svg>
<svg style="left:848px;top:658px;" width="9" height="8" viewBox="0 0 9 8"><path d="M4.4 0.4 L7 3 L1.8 3 Z" fill="#555"/><path d="M0.4 4.2 L8.4 4.2 M0.4 5.8 L8.4 5.8 M0.4 7.4 L8.4 7.4" stroke="#555" stroke-width="0.8"/></svg>
<svg style="left:901px;top:658px;" width="12" height="10" viewBox="0 0 12 10"><path d="M0.4 0.4 L11 0.4 L11 6.8 L5 6.8 L2.6 9.4 L2.6 6.8 L0.4 6.8 Z" fill="#4a4a4a"/></svg>
<svg style="left:981px;top:656.5px;" width="13" height="11" viewBox="0 0 13 11"><rect x="0.6" y="0.6" width="11.4" height="9.6" fill="none" stroke="#5f5f5f" stroke-width="0.9"/><path d="M3.4 0.6 L3.4 10.2" stroke="#5f5f5f" stroke-width="0.8"/><rect x="5" y="2.4" width="5.4" height="3.8" fill="none" stroke="#5f5f5f" stroke-width="0.8"/></svg>
<svg style="left:1015px;top:657px;" width="11" height="11" viewBox="0 0 11 11"><rect x="0.5" y="0.6" width="4" height="3.6" fill="none" stroke="#8a8a8a" stroke-width="0.8"/><rect x="0.5" y="6.2" width="4" height="3.6" fill="none" stroke="#8a8a8a" stroke-width="0.8"/><rect x="6.2" y="0.6" width="4" height="3.6" fill="none" stroke="#8a8a8a" stroke-width="0.8"/><rect x="6.2" y="6.2" width="4" height="3.6" fill="none" stroke="#8a8a8a" stroke-width="0.8"/></svg>
<svg style="left:1047.5px;top:657px;" width="12" height="11" viewBox="0 0 12 11"><path d="M5.6 1.4 L5.6 10.4 M0.6 0.8 L4.4 0.8 L5.6 1.6 L6.8 0.8 L10.6 0.8 L10.6 9 L6.8 9 L5.6 9.8 L4.4 9 L0.6 9 Z" fill="#e2e2e2" stroke="#8a8a8a" stroke-width="0.8"/><path d="M2 2.6 L2 7.2 M3.4 2.6 L3.4 7.2 M7.8 2.6 L7.8 7.2 M9.2 2.6 L9.2 7.2" stroke="#a0a0a0" stroke-width="0.6"/></svg>
<svg style="left:1080px;top:657px;" width="12" height="11" viewBox="0 0 12 11"><path d="M0.2 0.8 L11.4 0.8" stroke="#7a7a7a" stroke-width="1.1"/><path d="M1.4 1.2 L1.4 6.2 L10.2 6.2 L10.2 1.2" fill="none" stroke="#7a7a7a" stroke-width="0.8"/><path d="M4 3.4 L7.6 3.4" stroke="#7a7a7a" stroke-width="0.8"/><path d="M5.8 6.2 L5.8 9.6 M3.8 10 L7.8 10" stroke="#7a7a7a" stroke-width="0.8"/></svg>
<div style="left:1108px;top:662.3px;width:5.6px;height:1px;background:#6a6a6a;"></div>
<div style="left:1118.6px;top:662.3px;width:82px;height:1px;background:#7a7a7a;"></div>
<div style="left:1150.8px;top:658px;width:4.2px;height:9.4px;background:#3d3d3d;border-radius:0.8px;"></div>
<div style="left:1158.8px;top:660.4px;width:1px;height:4.8px;background:#7a7a7a;"></div>
<div id="tx">
<span style="left:321px;top:9.94px;font-size:9.4px;color:#ffffff;transform:scaleX(1.0223);-webkit-text-stroke:0;">Presentation1  -  PowerPoint</span>
<span style="left:610px;top:9.51px;font-size:9.2px;color:#e4c4ba;transform:scaleX(0.9557);">Drawing Tools</span>
<span style="left:1046px;top:9.60px;font-size:9.8px;color:#ffffff;transform:scaleX(1.0350);-webkit-text-stroke:0;">Do Nhi</span>
<span style="left:1088.6px;top:10.33px;font-size:8px;color:#6f8f92;transform:scaleX(0.9514);">DN</span>
<span style="left:16px;top:36.09px;font-size:9.7px;color:#ffffff;transform:scaleX(1.0240);">File</span>
<span style="left:57px;top:36.09px;font-size:9.7px;color:#b7472a;transform:scaleX(1.0834);">Home</span>
<span style="left:102px;top:36.09px;font-size:9.7px;color:#ffffff;transform:scaleX(0.9903);">Insert</span>
<span style="left:144px;top:36.09px;font-size:9.7px;color:#ffffff;transform:scaleX(1.0173);">Draw</span>
<span style="left:185px;top:36.09px;font-size:9.7px;color:#ffffff;transform:scaleX(0.9948);">Design</span>
<span style="left:232px;top:36.09px;font-size:9.7px;color:#ffffff;transform:scaleX(0.9993);">Transitions</span>
<span style="left:297px;top:36.09px;font-size:9.7px;color:#ffffff;transform:scaleX(1.0222);">Animations</span>
<span style="left:364px;top:36.09px;font-size:9.7px;color:#ffffff;transform:scaleX(0.9903);">Slide Show</span>
<span style="left:429px;top:36.09px;font-size:9.7px;color:#ffffff;transform:scaleX(1.0245);">Record</span>
<span style="left:478px;top:36.09px;font-size:9.7px;color:#ffffff;transform:scaleX(1.0074);">Review</span>
<span style="left:527px;top:36.09px;font-size:9.7px;color:#ffffff;transform:scaleX(1.0083);">View</span>
<span style="left:566px;top:36.09px;font-size:9.7px;color:#ffffff;transform:scaleX(1.0533);">Help</span>
<span style="left:606px;top:36.09px;font-size:9.7px;color:#ffffff;transform:scaleX(0.9936);">Shape Format</span>
<span style="left:709px;top:36.09px;font-size:9.7px;color:#ffffff;transform:scaleX(1.0373);">Tell me what you want to do</span>
<span style="left:41px;top:118.15px;font-size:8.8px;color:#363636;transform:scaleX(1.0357);">Clipboard</span>
<span style="left:179px;top:118.15px;font-size:8.8px;color:#363636;transform:scaleX(0.9596);">Slides</span>
<span style="left:354px;top:118.15px;font-size:8.8px;color:#363636;transform:scaleX(0.9654);">Font</span>
<span style="left:602px;top:118.15px;font-size:8.8px;color:#363636;transform:scaleX(0.9734);">Paragraph</span>
<span style="left:893px;top:118.15px;font-size:8.8px;color:#363636;transform:scaleX(0.9603);">Drawing</span>
<span style="left:1091px;top:118.15px;font-size:8.8px;color:#363636;transform:scaleX(1.0035);">Editing</span>
<span style="left:12px;top:87.73px;font-size:10.0px;color:#363636;transform:scaleX(0.8992);">Paste</span>
<span style="left:59px;top:60.94px;font-size:10.0px;color:#363636;transform:scaleX(0.9317);">Cut</span>
<span style="left:59px;top:79.94px;font-size:10.0px;color:#363636;transform:scaleX(0.9846);">Copy</span>
<span style="left:59px;top:98.94px;font-size:10.0px;color:#363636;transform:scaleX(0.9601);">Format Painter</span>
<span style="left:149px;top:87.73px;font-size:10.0px;color:#363636;transform:scaleX(0.9992);">New</span>
<span style="left:142px;top:100.73px;font-size:10.0px;color:#363636;transform:scaleX(0.9663);">Slide</span>
<span style="left:194px;top:60.94px;font-size:10.0px;color:#363636;transform:scaleX(0.9657);">Layout</span>
<span style="left:194px;top:79.94px;font-size:10.0px;color:#363636;transform:scaleX(0.9187);">Reset</span>
<span style="left:194px;top:98.94px;font-size:10.0px;color:#363636;transform:scaleX(0.9892);">Section</span>
<span style="left:257px;top:66.73px;font-size:10.0px;color:#363636;transform:scaleX(0.9739);">Calibri (Body)</span>
<span style="left:386px;top:66.73px;font-size:10.0px;color:#363636;transform:scaleX(0.9438);">18</span>
<span style="left:260.5px;top:91.83px;font-size:10px;color:#363636;font-weight:700;transform:scaleX(0.8017);">B</span>
<span style="left:281.8px;top:91.50px;font-size:10.4px;color:#363636;font-style:italic;transform:scaleX(1.1861);font-family:Liberation Serif,serif;font-weight:700;">I</span>
<span style="left:299.6px;top:91.53px;font-size:10.0px;color:#363636;transform:scaleX(0.9676);">U</span>
<span style="left:320px;top:90.75px;font-size:11.4px;color:#363636;font-weight:700;transform:scaleX(0.9199);text-shadow:0.8px 0.8px 1px rgba(0,0,0,.5);">S</span>
<span style="left:336.5px;top:92.72px;font-size:8.6px;color:#555;transform:scaleX(0.9885);text-decoration:line-through;">abc</span>
<span style="left:357px;top:90.81px;font-size:9.2px;color:#363636;transform:scaleX(1.0192);">AV</span>
<span style="left:389px;top:91.73px;font-size:10.0px;color:#555;transform:scaleX(0.9481);">Aa</span>
<span style="left:428px;top:65.89px;font-size:11px;color:#444;transform:scaleX(0.9804);">A</span>
<span style="left:447px;top:66.77px;font-size:10.2px;color:#444;transform:scaleX(1.0299);">A</span>
<span style="left:424.3px;top:89.81px;font-size:6.6px;color:#444;transform:scaleX(1.0894);">ab</span>
<span style="left:458.8px;top:89.64px;font-size:12px;color:#444;transform:scaleX(1.0230);">A</span>
<span style="left:470px;top:64.32px;font-size:8.6px;color:#4a4a4a;transform:scaleX(1.0463);">A</span>
<span style="left:660px;top:60.94px;font-size:10.0px;color:#363636;transform:scaleX(0.9987);">Text Direction</span>
<span style="left:660px;top:79.94px;font-size:10.0px;color:#363636;transform:scaleX(1.0072);">Align Text</span>
<span style="left:660px;top:98.94px;font-size:10.0px;color:#363636;transform:scaleX(0.9790);">Convert to SmartArt</span>
<span style="left:889px;top:87.73px;font-size:10.0px;color:#363636;transform:scaleX(0.9697);">Arrange</span>
<span style="left:932.5px;top:87.73px;font-size:10.0px;color:#363636;transform:scaleX(0.9506);">Quick</span>
<span style="left:927.5px;top:100.73px;font-size:10.0px;color:#363636;transform:scaleX(0.8996);">Styles</span>
<span style="left:982px;top:60.94px;font-size:10.0px;color:#363636;transform:scaleX(0.9332);">Shape Fill</span>
<span style="left:982px;top:79.94px;font-size:10.0px;color:#363636;transform:scaleX(0.9623);">Shape Outline</span>
<span style="left:982px;top:98.94px;font-size:10.0px;color:#363636;transform:scaleX(0.9421);">Shape Effects</span>
<span style="left:1088px;top:60.94px;font-size:10.0px;color:#363636;transform:scaleX(0.9253);">Find</span>
<span style="left:1088px;top:79.94px;font-size:10.0px;color:#363636;transform:scaleX(0.9400);">Replace</span>
<span style="left:1088px;top:98.94px;font-size:10.0px;color:#363636;transform:scaleX(0.9174);">Select</span>
<span style="left:6px;top:659.17px;font-size:8.9px;color:#404040;transform:scaleX(0.9796);-webkit-text-stroke:0.1px currentColor;">Slide 1 of 1</span>
<span style="left:91px;top:659.17px;font-size:8.9px;color:#404040;transform:scaleX(0.9530);-webkit-text-stroke:0.1px currentColor;">English (United States)</span>
<span style="left:205.5px;top:659.17px;font-size:8.9px;color:#404040;transform:scaleX(0.9461);-webkit-text-stroke:0.1px currentColor;">Accessibility: Investigate</span>
<span style="left:861px;top:659.17px;font-size:8.9px;color:#404040;transform:scaleX(1.0135);-webkit-text-stroke:0.1px currentColor;">Notes</span>
<span style="left:914.5px;top:659.17px;font-size:8.9px;color:#404040;transform:scaleX(0.9556);-webkit-text-stroke:0.1px currentColor;">Comments</span>
<span style="left:10.8px;top:143.50px;font-size:10.4px;color:#cf4a2b;transform:scaleX(0.8649);">1</span>
<span style="left:660.4px;top:269.30px;font-size:14.3px;color:#ffffff;transform:scaleX(0.9342);-webkit-text-stroke:0;">END</span>
</div>
</div></body></html>
